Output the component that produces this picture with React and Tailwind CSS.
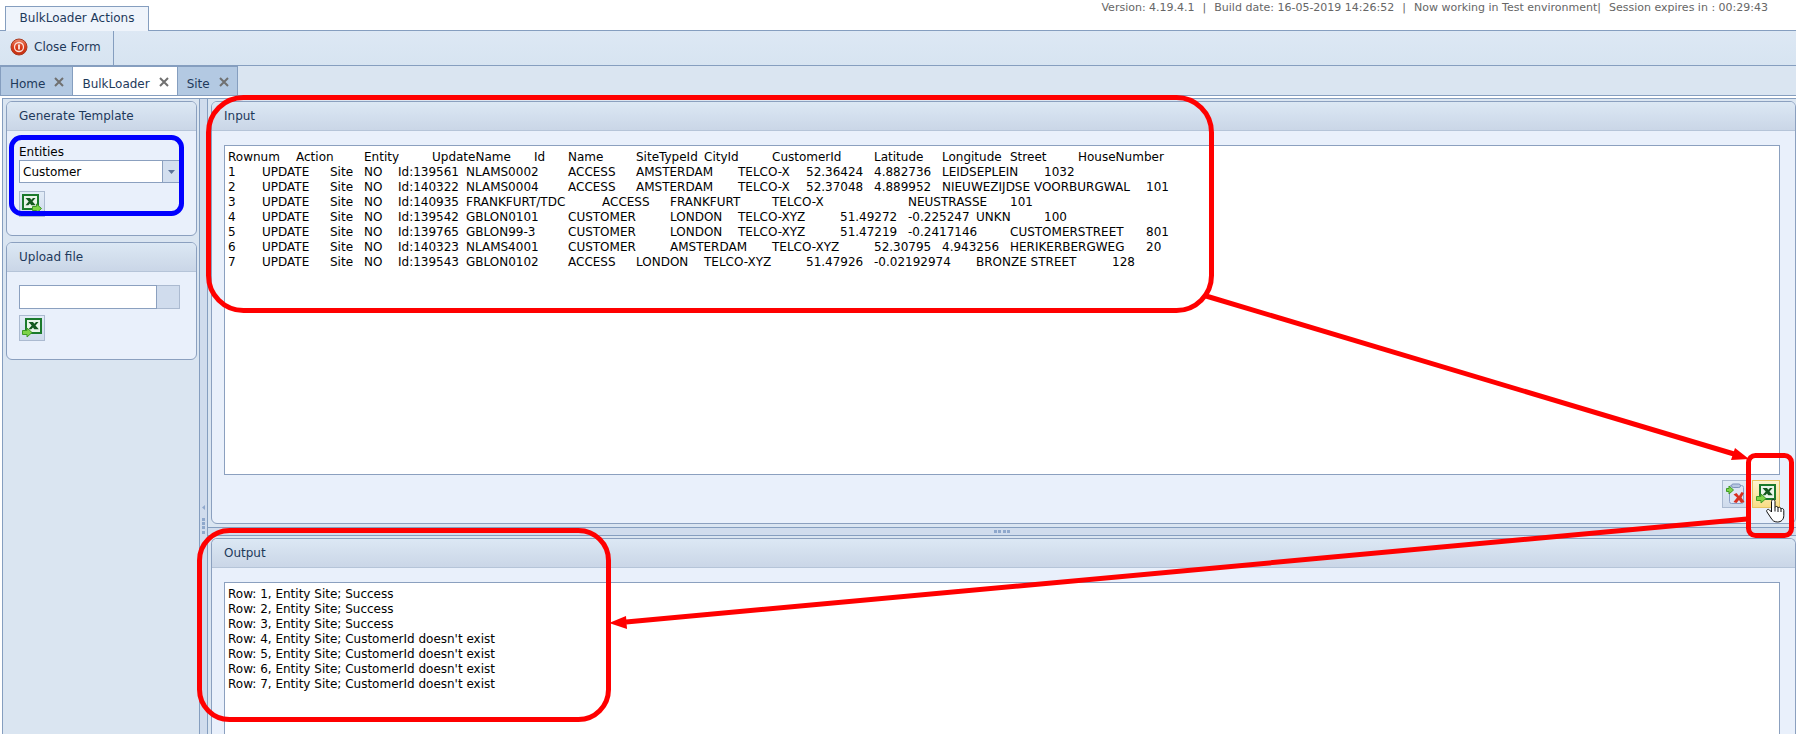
import React, { useState } from "react";

const tabs = ["Home", "BulkLoader", "Site"];

const inputRows = [
  "Rownum\tAction\tEntity\tUpdateName\tId\tName\tSiteTypeId\tCityId\tCustomerId\tLatitude\tLongitude\tStreet\tHouseNumber",
  "1\tUPDATE\tSite\tNO\tId:139561\tNLAMS0002\tACCESS\tAMSTERDAM\tTELCO-X\t52.36424\t4.882736\tLEIDSEPLEIN\t1032",
  "2\tUPDATE\tSite\tNO\tId:140322\tNLAMS0004\tACCESS\tAMSTERDAM\tTELCO-X\t52.37048\t4.889952\tNIEUWEZIJDSE VOORBURGWAL\t101",
  "3\tUPDATE\tSite\tNO\tId:140935\tFRANKFURT/TDC\t\tACCESS\tFRANKFURT\tTELCO-X\t\t\tNEUSTRASSE\t101",
  "4\tUPDATE\tSite\tNO\tId:139542\tGBLON0101\tCUSTOMER\tLONDON\tTELCO-XYZ\t51.49272\t-0.225247\tUNKN\t100",
  "5\tUPDATE\tSite\tNO\tId:139765\tGBLON99-3\tCUSTOMER\tLONDON\tTELCO-XYZ\t51.47219\t-0.2417146\tCUSTOMERSTREET\t801",
  "6\tUPDATE\tSite\tNO\tId:140323\tNLAMS4001\tCUSTOMER\tAMSTERDAM\tTELCO-XYZ\t52.30795\t4.943256\tHERIKERBERGWEG\t20",
  "7\tUPDATE\tSite\tNO\tId:139543\tGBLON0102\tACCESS\tLONDON\tTELCO-XYZ\t51.47926\t-0.02192974\tBRONZE STREET\t128",
];

const outputRows = [
  "Row: 1, Entity Site; Success",
  "Row: 2, Entity Site; Success",
  "Row: 3, Entity Site; Success",
  "Row: 4, Entity Site; CustomerId doesn't exist",
  "Row: 5, Entity Site; CustomerId doesn't exist",
  "Row: 6, Entity Site; CustomerId doesn't exist",
  "Row: 7, Entity Site; CustomerId doesn't exist",
];

function ExcelIcon({ exporting }) {
  return (
    <svg width="20" height="20" viewBox="0 0 20 20">
      <g transform={exporting ? "translate(0 0)" : "translate(3 0)"}>
        <rect x="1" y="1" width="15" height="14" fill="#eaf5ea" stroke="#1b7a2c" strokeWidth="2" />
        <path d="M3.500 4H8l1.300 1.800L11 4h2.500l-3 3.500 3.300 3.700H9.300L8 9.400l-1.700 1.800H3.500l3.200-3.700z" fill="#14591f" />
      </g>
      <path
        d={exporting ? "M10.500 12.500h4V10l5 4.500-5 4.500v-2.500h-4z" : "M.5 12.500H5V10l5 4.500L5 19v-2.500H.5z"}
        fill="#7ed348"
        stroke="#3f9a26"
      />
    </svg>
  );
}

function ClearIcon() {
  return (
    <svg width="20" height="22" viewBox="0 0 20 22">
      <rect x="3.500" y="2.500" width="14" height="18" rx="2" fill="#dde6f5" stroke="#8b9fc6" />
      <rect x="5.500" y="1" width="9" height="3.500" rx="1.700" fill="#b9c8e2" stroke="#7d93bd" />
      <path d="M.5 5.500h2.500V3l4.500 4L3 11V8.500H.5z" fill="#7ed348" stroke="#3f9a26" />
      <path
        d="M7.500 11.500l3-1.500 2.500 3 2.500-4L18 10l-2.500 4.500 3 4.500-3.500 1-2-3-2.500 3-3-1 3.500-4.500z"
        fill="#d9301f"
      />
    </svg>
  );
}

function PowerIcon() {
  return (
    <svg width="18" height="18" viewBox="0 0 18 18">
      <defs>
        <linearGradient id="power" x1="0" y1="0" x2="0" y2="1">
          <stop offset="0" stopColor="#ef8a6c" />
          <stop offset="0.500" stopColor="#d93a18" />
          <stop offset="1" stopColor="#c43012" />
        </linearGradient>
      </defs>
      <circle cx="9" cy="9" r="8" fill="url(#power)" stroke="#a83a22" />
      <circle cx="9" cy="9" r="4.500" fill="none" stroke="#fbe3dc" strokeWidth="1.300" />
      <path d="M9 6.500v5" stroke="#fff" strokeWidth="1.600" />
    </svg>
  );
}

function Panel({ title, className, children }) {
  return (
    <section className={`flex flex-col border border-[#8ba0bf] rounded-md bg-[#e9f0fb] overflow-hidden ${className}`}>
      <h2 className="h-[29px] shrink-0 flex items-center px-3 border-b border-[#b5c4d8] bg-linear-to-b from-[#dce8f4] to-[#cad6e7] text-[#1e395b]">
        {title}
      </h2>
      {children}
    </section>
  );
}

// Markers and arrows drawn over the form
function Annotations() {
  return (
    <svg className="absolute top-0 left-0 pointer-events-none" width="1796" height="734" fill="none" strokeWidth="5">
      <rect x="11.500" y="137.500" width="170" height="76" rx="10" stroke="#0000ff" />
      <g stroke="#ff0000">
        <rect x="208.500" y="97.500" width="1003" height="213" rx="35" />
        <rect x="199.500" y="530.500" width="409" height="189" rx="30" />
        <rect x="1748.500" y="455.500" width="43" height="80" rx="7" />
        <path d="M1206 296L1734 454" />
        <path d="M1747 519L626 622" />
      </g>
      <path d="M1749 459L1735 448L1731 460z" fill="#ff0000" />
      <path d="M609 623L626 616L627 629z" fill="#ff0000" />
      <path
        d="M1771.500 501.500c0-2.500 3.500-2.500 3.500 0v6c.5-1.500 3-1.500 3 .5 .5-1.200 3-1 3 1 .5-1 2.800-.8 2.800 1.500v5c0 4-2.500 6.500-6.300 6.500-3.500 0-5-1.500-6.500-4l-4-6c-1.200-2 1-3.500 2.500-2l2 2z"
        fill="#fff"
        stroke="#111"
        strokeWidth="1"
      />
      <path d="M1775 507.500v4M1778 508v4M1781 509v3" stroke="#111" strokeWidth="1" />
    </svg>
  );
}

export default function App() {
  const [active, setActive] = useState("BulkLoader");
  const [entity, setEntity] = useState("Customer");
  const [input, setInput] = useState(inputRows.join("\n"));

  const iconButton = "flex items-center justify-center border border-[#abbad0] bg-linear-to-b from-[#e2ecf7] to-[#cfdbec]";
  const textBox = "border border-[#8ba0bf] bg-white text-black resize-none outline-none px-[3px] pt-1 leading-[15px] whitespace-pre overflow-hidden";

  return (
    <div className="relative h-screen flex flex-col overflow-hidden bg-[#dae5f1] text-xs text-[#1e395b] font-['DejaVu_Sans',sans-serif]">
      <header className="h-[31px] shrink-0 flex justify-between border-b border-[#859ebf] bg-white">
        <div className="mt-[6px] ml-[5px] w-36 h-[25px] flex items-center justify-center pb-[2px] border border-b-0 border-[#859ebf] bg-[#eff4fb]">
          BulkLoader Actions
        </div>
        <p className="pr-7 flex gap-2 text-[11px] leading-4 text-[#666]">
          <span>Version: 4.19.4.1</span>
          <span>|</span>
          <span>Build date: 16-05-2019 14:26:52</span>
          <span>|</span>
          <span>Now working in Test environment|</span>
          <span>Session expires in : 00:29:43</span>
        </p>
      </header>

      <div className="h-[35px] shrink-0 flex border-b border-[#859ebf] bg-linear-to-b from-[#dde8f4] to-[#d7e4f1]">
        <button className="w-[114px] flex items-center gap-[6px] pl-[10px] pb-[2px] border-r border-[#859ebf]">
          <PowerIcon />
          Close Form
        </button>
      </div>

      <nav className="h-[30px] shrink-0 flex items-end border-b border-[#859ebf]">
        {tabs.map((tab) => (
          <div
            key={tab}
            className={`h-[29px] -mr-px flex items-center gap-2 pl-[9px] pr-[7px] border border-b-0 border-[#859ebf] ${
              tab === active ? "bg-white" : "bg-[#b3c9e2]"
            }`}
          >
            <button className="pt-[6px]" onClick={() => setActive(tab)}>{tab}</button>
            <button aria-label={`Close ${tab}`} className="pt-[2px]">
              <svg width="12" height="12" viewBox="0 0 12 12" stroke="#707070" strokeWidth="2">
                <path d="M2 2l8 8M10 2l-8 8" />
              </svg>
            </button>
          </div>
        ))}
      </nav>

      <div className="flex-1 min-h-0 flex pt-[2px] pl-[2px] bg-white">
        <aside className="w-[197px] shrink-0 flex flex-col gap-[6px] pt-[2px] pl-[3px] pr-[2px] border-t border-l border-[#859ebf] bg-[#dae5f1]">
          <Panel title="Generate Template" className="h-[135px]">
            <div className="px-3 pt-[14px] text-black">
              <label htmlFor="entities" className="block leading-[15px]">Entities</label>
              <div className="relative h-[23px] flex border border-[#8ba0bf] bg-white">
                <select
                  id="entities"
                  className="w-full appearance-none pl-[3px] outline-none"
                  value={entity}
                  onChange={(e) => setEntity(e.target.value)}
                >
                  <option>Customer</option>
                  <option>Site</option>
                </select>
                <span className="absolute top-0 right-0 h-full w-[21px] flex items-center pl-[5px] border-l border-[#8ba0bf] bg-[#d3dfef] pointer-events-none">
                  <svg width="7" height="4" viewBox="0 0 7 4"><path d="M0 0h7L3.500 4z" fill="#5b7398" /></svg>
                </span>
              </div>
              <button aria-label="Export template" className={`mt-2 size-[26px] ${iconButton}`}>
                <ExcelIcon exporting />
              </button>
            </div>
          </Panel>
          <Panel title="Upload file" className="h-[118px]">
            <div className="pl-3 pr-4 pt-[13px]">
              <div className="flex h-6">
                <input aria-label="File name" className="w-[138px] border border-[#8ba0bf] bg-white px-1 outline-none" />
                <button aria-label="Browse" className="flex-1 border border-l-0 border-[#abbad0] bg-[#d0dced]"></button>
              </div>
              <button aria-label="Upload file" className={`mt-[6px] size-[26px] ${iconButton}`}>
                <ExcelIcon />
              </button>
            </div>
          </Panel>
        </aside>

        <div className="w-[9px] shrink-0 flex flex-col items-center justify-center border-x border-t border-[#859ebf] bg-[#d0dced]">
          <svg width="5" height="34" viewBox="0 0 5 34" fill="#8fa8cc" className="mt-[208px]">
            <path d="M4 1v5L1 3.500z" />
            <path d="M1 14h3v3H1zM1 18h3v3H1zM1 22h3v3H1zM1 27h3v3H1z" />
          </svg>
        </div>

        <main className="flex-1 min-w-0 flex flex-col border-t border-[#859ebf] bg-[#dae5f1]">
          <div className="pt-[2px] pl-[3px] pb-[3px]">
            <Panel title="Input" className="h-[423px]">
              <div className="pl-3 pr-[15px] pt-[14px] flex flex-col">
                <textarea
                  aria-label="Input"
                  wrap="off"
                  spellCheck={false}
                  className={`h-[330px] [tab-size:34px] ${textBox}`}
                  value={input}
                  onChange={(e) => setInput(e.target.value)}
                />
                <div className="mt-[5px] flex justify-end gap-[2px]">
                  <button aria-label="Clear input" className={`size-7 ${iconButton}`} onClick={() => setInput("")}>
                    <ClearIcon />
                  </button>
                  <button aria-label="Process input" className="size-7 flex items-center justify-center border border-[#e5c365] bg-linear-to-b from-[#fdf3cf] to-[#f9dd86]">
                    <ExcelIcon />
                  </button>
                </div>
              </div>
            </Panel>
          </div>
          <div className="h-[9px] shrink-0 flex items-center justify-center border-y border-[#859ebf] bg-[#d0dced]">
            <svg width="16" height="3" viewBox="0 0 16 3" fill="#8fa8cc">
              <path d="M0 0h3v3H0zM4 0h3v3H4zM9 0h3v3H9zM13 0h3v3h-3z" />
            </svg>
          </div>
          <div className="flex-1 min-h-0 flex flex-col pt-[2px] pl-[3px]">
            <Panel title="Output" className="flex-1 border-b-0 rounded-b-none">
              <div className="flex-1 pl-3 pr-[15px] pt-[14px] flex flex-col">
                <textarea
                  aria-label="Output"
                  readOnly
                  wrap="off"
                  className={`flex-1 border-b-0 ${textBox}`}
                  value={outputRows.join("\n")}
                />
              </div>
            </Panel>
          </div>
        </main>
      </div>

      <Annotations />
    </div>
  );
}
